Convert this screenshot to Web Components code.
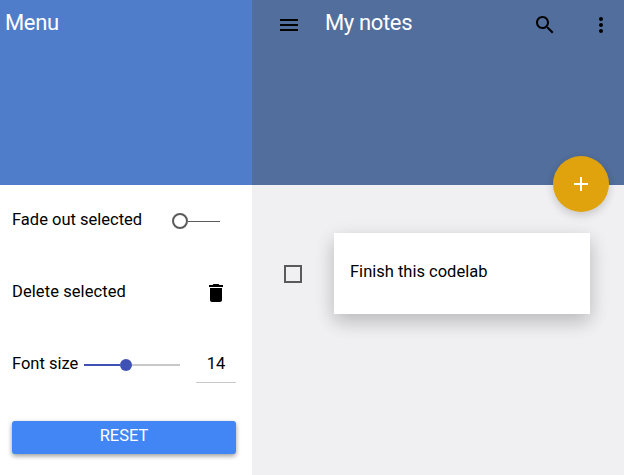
<!DOCTYPE html>
<html lang="en"><head><meta charset="utf-8"><title>My notes</title>
<style>
html,body{margin:0;height:100%;overflow:hidden}
body{font:16.5px/24px Roboto,sans-serif;color:#000;background:#f0f0f2}
</style></head><body>
<notes-app></notes-app>
<script>
const define=(name,html)=>customElements.define(name,class extends HTMLElement{
  constructor(){super();const t=document.createElement('template');t.innerHTML=html;
    this.attachShadow({mode:'open'}).append(t.content.cloneNode(true));}
});
const ICONS={
  menu:'M3 18h18v-2H3v2zm0-5h18v-2H3v2zm0-7v2h18V6H3z',
  search:'M15.5 14h-.79l-.28-.27C15.41 12.59 16 11.11 16 9.5 16 5.91 13.09 3 9.5 3S3 5.91 3 9.5 5.91 16 9.5 16c1.61 0 3.09-.59 4.23-1.57l.27.28v.79l5 4.99L20.49 19l-4.99-5zm-6 0C7.01 14 5 11.99 5 9.5S7.01 5 9.5 5 14 7.01 14 9.5 11.99 14 9.5 14z',
  more:'M12 8c1.1 0 2-.9 2-2s-.9-2-2-2-2 .9-2 2 .9 2 2 2zm0 2c-1.1 0-2 .9-2 2s.9 2 2 2 2-.9 2-2-.9-2-2-2zm0 6c-1.1 0-2 .9-2 2s.9 2 2 2 2-.9 2-2-.9-2-2-2z',
  add:'M19 13h-6v6h-2v-6H5v-2h6V5h2v6h6v2z',
  delete:'M6 19c0 1.1.9 2 2 2h8c1.1 0 2-.9 2-2V7H6v12zM19 4h-3.5l-1-1h-5l-1 1H5v2h14V4z'
};
customElements.define('md-icon',class extends HTMLElement{
  connectedCallback(){this.attachShadow({mode:'open'}).innerHTML=
    `<style>:host{display:block;width:24px;height:24px;flex:none}svg{display:block;fill:currentColor}</style><svg width="24" height="24" viewBox="0 0 24 24"><path d="${ICONS[this.getAttribute('name')]}"/></svg>`;}
});
define('app-header',`<style>
:host{display:flex;box-sizing:border-box;height:185px;align-items:flex-start;background:var(--header);color:#fff;font-size:22px;line-height:26px;letter-spacing:-.35px}
</style><slot></slot>`);
define('setting-row',`<style>
:host{display:flex;height:72px;align-items:center;padding:0 16px 0 12px}
.label{white-space:nowrap;letter-spacing:var(--label-spacing,0);margin-top:-3px}
.control{flex:1;display:flex;align-items:center;justify-content:flex-end}
</style><span class="label"><slot name="label"></slot></span><div class="control"><slot></slot></div>`);
define('toggle-switch',`<style>
:host{display:flex;align-items:center;width:48px;height:16px;margin-right:16px}
i{box-sizing:border-box;width:16px;height:16px;border:2px solid #5a5a5a;border-radius:50%}
b{height:1px;flex:1;background:#5a5a5a;margin-top:1px}
</style><i></i><b></b>`);
define('range-slider',`<style>
:host{display:flex;align-items:center;width:96px;height:12px;margin-right:16px}
.on{width:36px;height:2px;background:#3f51b5}.off{flex:1;height:2px;background:#c8c8c8}
.knob{width:12px;height:12px;border-radius:50%;background:#3f51b5}
</style><div class="on"></div><div class="knob"></div><div class="off"></div>`);
define('number-field',`<style>
:host{display:block;width:40px;height:35px;box-sizing:border-box;border-bottom:1px solid #c8c8c8;text-align:center;line-height:32px}
</style><slot></slot>`);
define('raised-button',`<style>
:host{display:block;flex:1;margin-top:1px;height:33px;border-radius:3px;background:#4285f4;color:#fff;text-align:center;line-height:30px;
box-shadow:0 2px 5px rgba(0,0,0,.26),0 2px 4px rgba(0,0,0,.16)}
</style><slot></slot>`);
define('fab-button',`<style>
:host{display:flex;align-items:center;justify-content:center;width:56px;height:56px;border-radius:50%;background:#e0a30d;color:#fff;
box-shadow:0 4px 10px rgba(0,0,0,.12),0 2px 8px rgba(0,0,0,.06)}
</style><slot></slot>`);
define('check-box',`<style>
:host{display:block;box-sizing:border-box;width:18px;height:18px;border:2px solid #5a5a5a;margin-right:32px}
</style>`);
define('note-card',`<style>
:host{display:block;box-sizing:border-box;width:256px;height:81px;padding:27px 16px;background:#fff;
box-shadow:0 6px 20px rgba(0,0,0,.1),0 8px 17px rgba(0,0,0,.14)}
</style><slot></slot>`);
define('notes-app',`<style>
:host{display:grid;grid-template-columns:252px 1fr;height:475px;overflow:hidden}
aside{background:#fff}aside app-header{--header:#4f7dc9;padding:10px 5px}
aside setting-row:nth-of-type(2){--label-spacing:.08px}
main{position:relative;background:#f0f0f2}
main app-header{--header:#526e9c;padding:10px 11px 0 25px}
main app-header md-icon{color:#000;margin-top:3px}
.title{margin-left:24px;flex:1}.more{margin-left:32px}
fab-button{position:absolute;right:15px;top:156px}
.note{display:flex;align-items:center;padding:48px 34px 0 32px}
.trash{margin-right:8px}
</style>
<aside><app-header><span>Menu</span></app-header>
<setting-row><span slot="label">Fade out selected</span><toggle-switch></toggle-switch></setting-row>
<setting-row><span slot="label">Delete selected</span><md-icon class="trash" name="delete"></md-icon></setting-row>
<setting-row><span slot="label">Font size</span><range-slider></range-slider><number-field>14</number-field></setting-row>
<setting-row><raised-button>RESET</raised-button></setting-row></aside>
<main><app-header><md-icon name="menu"></md-icon><span class="title">My notes</span><md-icon name="search"></md-icon><md-icon class="more" name="more"></md-icon></app-header>
<fab-button><md-icon name="add"></md-icon></fab-button>
<div class="note"><check-box></check-box><note-card>Finish this codelab</note-card></div></main>`);
</script></body></html>
